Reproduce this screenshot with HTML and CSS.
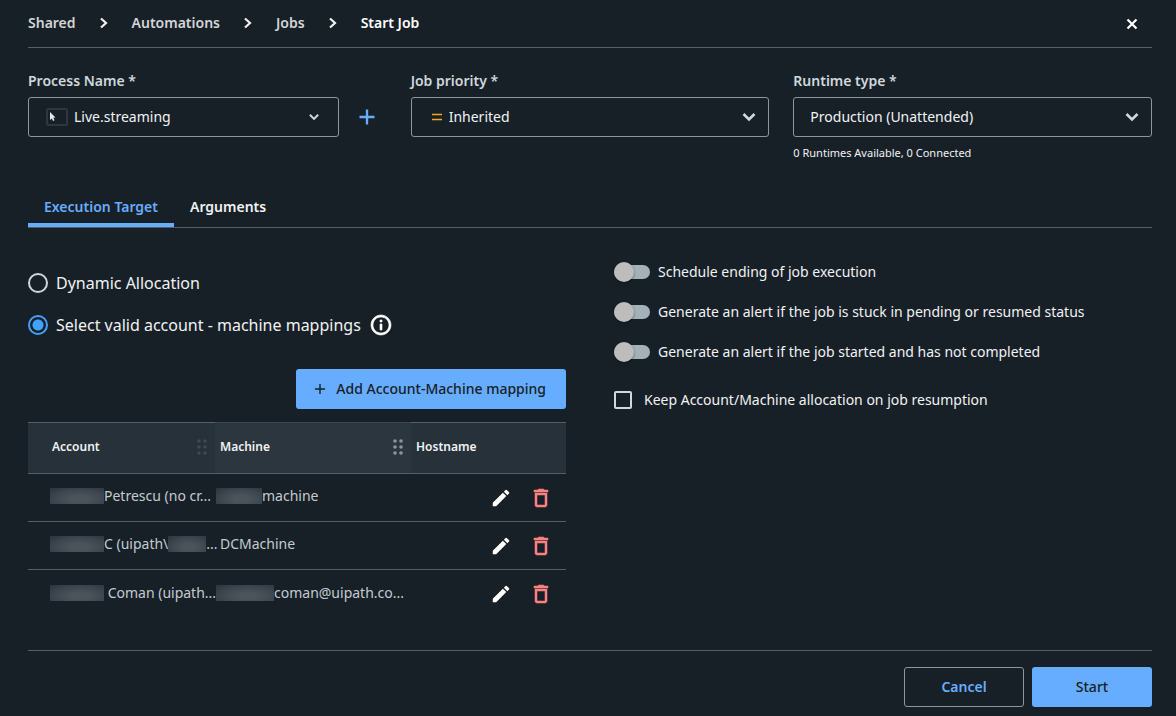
FILE: index.html
```html
<!DOCTYPE html>
<html lang="en">
<head>
<meta charset="utf-8">
<title>Start Job</title>
<link rel="stylesheet" href="styles.css">
</head>
<body>
<svg class="sprite" aria-hidden="true">
  <symbol id="chevron-right" viewBox="0 0 24 24"><path d="M9 7.5l5 4.5-5 4.5" fill="none" stroke="currentColor" stroke-width="2.2"/></symbol>
  <symbol id="chevron-down" viewBox="0 0 24 24"><path d="M6.5 9l5.5 5.5L17.500 9" fill="none" stroke="currentColor" stroke-width="2.6"/></symbol>
  <symbol id="plus" viewBox="0 0 24 24"><path d="M12 3v18M3 12h18" fill="none" stroke="currentColor" stroke-width="2.800"/></symbol>
  <symbol id="grip" viewBox="0 0 12 18"><g fill="currentColor"><circle cx="3" cy="3" r="1.800"/><circle cx="9" cy="3" r="1.800"/><circle cx="3" cy="9" r="1.800"/><circle cx="9" cy="9" r="1.800"/><circle cx="3" cy="15" r="1.800"/><circle cx="9" cy="15" r="1.800"/></g></symbol>
  <symbol id="pencil" viewBox="0 0 24 24"><path fill="currentColor" d="M3 17.250V21h3.750L17.810 9.940l-3.750-3.750L3 17.250zM20.710 7.040a1 1 0 0 0 0-1.410l-2.340-2.340a1 1 0 0 0-1.410 0l-1.830 1.830 3.750 3.750 1.830-1.830z"/></symbol>
  <symbol id="trash" viewBox="0 0 24 24"><path fill="currentColor" stroke="currentColor" stroke-width=".5" d="M6 19c0 1.100.9 2 2 2h8c1.100 0 2-.9 2-2V7H6v12zM8 9h8v10H8V9zm7.500-5l-1-1h-5l-1 1H5v2h14V4z"/></symbol>
  <symbol id="info" viewBox="0 0 24 24"><path fill="currentColor" d="M11 7h2v2h-2zm0 4h2v6h-2zm1-9C6.480 2 2 6.480 2 12s4.480 10 10 10 10-4.480 10-10S17.520 2 12 2zm0 18c-4.410 0-8-3.590-8-8s3.590-8 8-8 8 3.590 8 8-3.590 8-8 8z" stroke="currentColor" stroke-width=".6"/></symbol>
</svg>

<div class="page">
  <header class="header">
    <nav class="breadcrumb" aria-label="Breadcrumb">
      <a href="#">Shared</a>
      <svg class="icon"><use href="#chevron-right"/></svg>
      <a href="#">Automations</a>
      <svg class="icon"><use href="#chevron-right"/></svg>
      <a href="#">Jobs</a>
      <svg class="icon"><use href="#chevron-right"/></svg>
      <a href="#" class="current" aria-current="page">Start Job</a>
    </nav>
    <button class="icon-button close" type="button" aria-label="Close">
      <svg width="12" height="12" viewBox="0 0 12 12"><path d="M1.500 1.500l9 9M10.500 1.500l-9 9" stroke="currentColor" stroke-width="2.200"/></svg>
    </button>
  </header>

  <section class="fields">
    <div class="field">
      <label for="process">Process Name *</label>
      <div class="field-row">
        <div class="select">
          <select id="process" class="with-process-icon"><option>Live.streaming</option></select>
          <svg class="lead process-icon" width="22" height="18" viewBox="0 0 22 18"><rect x="1" y="1" width="20" height="16" rx="1" fill="none" stroke="#30363c" stroke-width="2"/><path d="M4 4v8l1.800-1.500L7 13l1.500-.7-1.200-2.500 2.200-.3z" fill="#e4e8ea"/></svg>
          <svg class="arrow small"><use href="#chevron-down"/></svg>
        </div>
        <button class="icon-button add" type="button" aria-label="Add process"><svg class="icon-20"><use href="#plus"/></svg></button>
      </div>
    </div>
    <div class="field">
      <label for="priority">Job priority *</label>
      <div class="select">
        <select id="priority" class="with-priority-icon"><option>Inherited</option></select>
        <svg class="lead priority-icon" width="10" height="8" viewBox="0 0 10 8"><path d="M0 1.500h10M0 6.500h10" stroke="#f5a623" stroke-width="1.700"/></svg>
        <svg class="arrow"><use href="#chevron-down"/></svg>
      </div>
    </div>
    <div class="field">
      <label for="runtime">Runtime type *</label>
      <div class="select">
        <select id="runtime"><option>Production (Unattended)</option></select>
        <svg class="arrow"><use href="#chevron-down"/></svg>
      </div>
      <p class="hint">0 Runtimes Available, 0 Connected</p>
    </div>
  </section>

  <div class="tabs" role="tablist">
    <button class="tab active" role="tab" aria-selected="true" type="button">Execution Target</button>
    <button class="tab" role="tab" aria-selected="false" type="button">Arguments</button>
  </div>

  <main class="content">
    <section class="target">
      <div class="radios">
        <label class="radio"><input type="radio" name="allocation">Dynamic Allocation</label>
        <div class="radio-row">
          <label class="radio"><input type="radio" name="allocation" checked>Select valid account - machine mappings</label>
          <svg class="icon info"><use href="#info"/></svg>
        </div>
      </div>
      <button class="button primary add-mapping" type="button"><svg class="icon-12" viewBox="0 0 12 12"><path d="M6 1v10M1 6h10" stroke="currentColor" stroke-width="1.400"/></svg>Add Account-Machine mapping</button>
      <table class="mappings">
        <colgroup><col class="col-account"><col class="col-machine"><col></colgroup>
        <thead>
          <tr>
            <th scope="col"><div class="head first">Account<svg class="grip"><use href="#grip"/></svg></div></th>
            <th scope="col" class="hovered"><div class="head">Machine<svg class="grip"><use href="#grip"/></svg></div></th>
            <th scope="col"><div class="head">Hostname</div></th>
          </tr>
        </thead>
        <tbody>
          <tr>
            <td><div class="cell first"><span class="mask w-54"></span>Petrescu (no cr...</div></td>
            <td><div class="cell masked"><span class="mask w-46"></span>machine</div></td>
            <td><div class="actions"><button class="icon-button" type="button" aria-label="Edit"><svg class="icon-22"><use href="#pencil"/></svg></button><button class="icon-button danger" type="button" aria-label="Remove"><svg class="icon"><use href="#trash"/></svg></button></div></td>
          </tr>
          <tr>
            <td><div class="cell first"><span class="mask w-54"></span>C (uipath\<span class="mask w-38"></span>...</div></td>
            <td><div class="cell">DCMachine</div></td>
            <td><div class="actions"><button class="icon-button" type="button" aria-label="Edit"><svg class="icon-22"><use href="#pencil"/></svg></button><button class="icon-button danger" type="button" aria-label="Remove"><svg class="icon"><use href="#trash"/></svg></button></div></td>
          </tr>
          <tr>
            <td><div class="cell first"><span class="mask w-54"></span>&nbsp;Coman (uipath...</div></td>
            <td><div class="cell masked"><span class="mask w-58"></span>coman@uipath.co...</div></td>
            <td><div class="actions"><button class="icon-button" type="button" aria-label="Edit"><svg class="icon-22"><use href="#pencil"/></svg></button><button class="icon-button danger" type="button" aria-label="Remove"><svg class="icon"><use href="#trash"/></svg></button></div></td>
          </tr>
        </tbody>
      </table>
    </section>

    <section class="options">
      <label class="toggle"><input type="checkbox" role="switch">Schedule ending of job execution</label>
      <label class="toggle"><input type="checkbox" role="switch">Generate an alert if the job is stuck in pending or resumed status</label>
      <label class="toggle"><input type="checkbox" role="switch">Generate an alert if the job started and has not completed</label>
      <label class="check"><input type="checkbox">Keep Account/Machine allocation on job resumption</label>
    </section>
  </main>

  <footer class="footer">
    <button class="button outline" type="button">Cancel</button>
    <button class="button primary" type="button">Start</button>
  </footer>
</div>
</body>
</html>
```
FILE: styles.css
```css
:root {
  --bg: #182027;
  --line: #526069;
  --border: #8a97a0;
  --muted: #cfd8dd;
  --text: #f0f2f4;
  --accent: #66adff;
}

* { box-sizing: border-box; }

body {
  margin: 0;
  background: var(--bg);
  color: var(--text);
  font: 450 14px/20px "Noto Sans", sans-serif;
}

button, select { font: inherit; color: inherit; }
button { cursor: pointer; }
.sprite { display: none; }
.icon { width: 24px; height: 24px; }
.icon-22 { width: 22px; height: 22px; }
.icon-20 { width: 20px; height: 20px; }
.icon-12 { width: 12px; height: 12px; }

.page {
  min-height: 100vh;
  display: flex;
  flex-direction: column;
  padding: 0 24px 0 28px;
}

.header {
  height: 48px;
  display: flex;
  align-items: center;
  justify-content: space-between;
  border-bottom: 1px solid var(--line);
}

.breadcrumb {
  display: flex;
  align-items: center;
  gap: 16px;
  padding-bottom: 2px;
  font-weight: 600;
}
.breadcrumb a { color: #d3d5d7; text-decoration: none; }
.breadcrumb .current { color: #fff; }

.icon-button {
  display: grid;
  place-items: center;
  width: 40px;
  height: 40px;
  padding: 0;
  border: 0;
  background: none;
}
.close { color: #fff; }

.fields {
  display: grid;
  grid-template-columns: repeat(3, 1fr);
  gap: 24px;
  margin-top: 23px;
}
.field > label {
  display: block;
  margin-bottom: 6px;
  color: var(--muted);
  font-weight: 600;
}
.field-row { display: flex; gap: 8px; }
.field-row .select { flex: 1; }
.add { color: var(--accent); }

.select { display: grid; align-items: center; }
.select > * { grid-area: 1 / 1; }
.select select {
  appearance: none;
  width: 100%;
  height: 40px;
  padding: 0 40px 0 16px;
  border: 1px solid var(--border);
  border-radius: 3px;
  background: transparent;
}
.select select.with-process-icon { padding-left: 45px; }
.select select.with-priority-icon { padding-left: 37px; }
.lead, .arrow { pointer-events: none; }
.process-icon { margin-left: 18px; }
.priority-icon { margin-left: 21px; }
.arrow {
  width: 24px;
  height: 24px;
  margin-right: 8px;
  justify-self: end;
  color: var(--muted);
}
.arrow.small { width: 18px; height: 18px; margin-right: 16px; }

.hint { margin: 8px 0 0; font-size: 11px; line-height: 16px; }

.tabs {
  display: flex;
  margin-top: 26px;
  border-bottom: 1px solid var(--line);
}
.tab {
  height: 40px;
  padding: 4px 16px 0;
  border: 0;
  border-bottom: 4px solid transparent;
  background: none;
  font-weight: 600;
}
.tab.active { color: var(--accent); border-color: var(--accent); }

.content {
  flex: 1;
  display: grid;
  grid-template-columns: 1fr 1fr;
  gap: 48px;
  padding: 32px 0;
}
.target { display: flex; flex-direction: column; padding-top: 11px; }
.radios { display: grid; gap: 18px; font-size: 16px; line-height: 24px; }
.radio, .radio-row { display: flex; align-items: center; gap: 8px; }

.radio input {
  appearance: none;
  width: 20px;
  height: 20px;
  margin: 0;
  border: 2px solid var(--muted);
  border-radius: 50%;
}
.radio input:checked {
  border-color: #42a1ff;
  background: radial-gradient(circle, #42a1ff 5px, transparent 6px);
}
.info { color: #fff; }

.button {
  min-width: 120px;
  height: 40px;
  padding: 0 16px;
  border: 0;
  border-radius: 3px;
}
.primary { background: var(--accent); color: #182027; font-weight: 500; }
.outline {
  border: 1px solid var(--border);
  background: none;
  color: var(--accent);
  font-weight: 600;
}
.add-mapping {
  display: flex;
  align-items: center;
  gap: 10px;
  align-self: flex-end;
  margin: 32px 0 13px;
  padding: 0 20px 0 18px;
}

.mappings {
  width: 100%;
  table-layout: fixed;
  border-collapse: separate;
  border-spacing: 0;
}
.col-account { width: 187px; }
.col-machine { width: 196px; }
th, td { padding: 0; border-bottom: 1px solid var(--line); text-align: left; }
th {
  height: 52px;
  border-top: 1px solid var(--line);
  background: #273139;
  font-size: 12px;
  font-weight: 600;
}
th.hovered { background: #2c363e; border-top-color: #3b474f; }
td { height: 48px; color: #c3cbd1; font-weight: 400; }
tbody tr:last-child td { border-bottom: 0; }

.head {
  display: flex;
  align-items: center;
  justify-content: space-between;
  padding: 0 7px 2px 5px;
}
.head.first { padding-left: 24px; }
.grip { width: 12px; height: 18px; color: #3e4950; }
.hovered .grip { color: #8a97a0; }

.cell {
  display: flex;
  align-items: center;
  padding: 0 0 3px 5px;
  white-space: nowrap;
}
.cell.first { padding-left: 22px; }
.cell.masked { padding-left: 1px; }
.mask {
  flex: none;
  height: 16px;
  background: radial-gradient(ellipse at 55% 70%, #4b535b 20%, #3d464e 60%, #2b343c);
}
.w-38 { width: 38px; }
.w-46 { width: 46px; }
.w-54 { width: 54px; }
.w-58 { width: 58px; }

.actions {
  display: flex;
  justify-content: flex-end;
  padding-right: 5px;
  color: #fff;
}
.danger { color: #ff8080; }

.options { display: grid; gap: 16px; align-content: start; }
.toggle, .check { display: flex; align-items: center; min-height: 24px; }
.toggle { gap: 8px; }
.check { gap: 12px; margin-top: 8px; }

.toggle input {
  appearance: none;
  width: 36px;
  height: 14px;
  margin: 0;
  border-radius: 7px;
  background: #a4b1b9;
  display: flex;
  align-items: center;
}
.toggle input::before {
  content: "";
  flex: none;
  width: 20px;
  height: 20px;
  border-radius: 50%;
  background: #bdbdbd;
  box-shadow: 0 1px 3px rgb(0 0 0 / 40%);
}
.toggle input:checked::before { margin-left: auto; background: var(--accent); }

.check input {
  appearance: none;
  width: 18px;
  height: 18px;
  margin: 0;
  border: 2px solid var(--muted);
  border-radius: 2px;
}
.check input:checked { background: var(--accent); }

.footer {
  display: flex;
  justify-content: flex-end;
  gap: 8px;
  padding: 16px 0 9px;
  border-top: 1px solid var(--line);
}
```
